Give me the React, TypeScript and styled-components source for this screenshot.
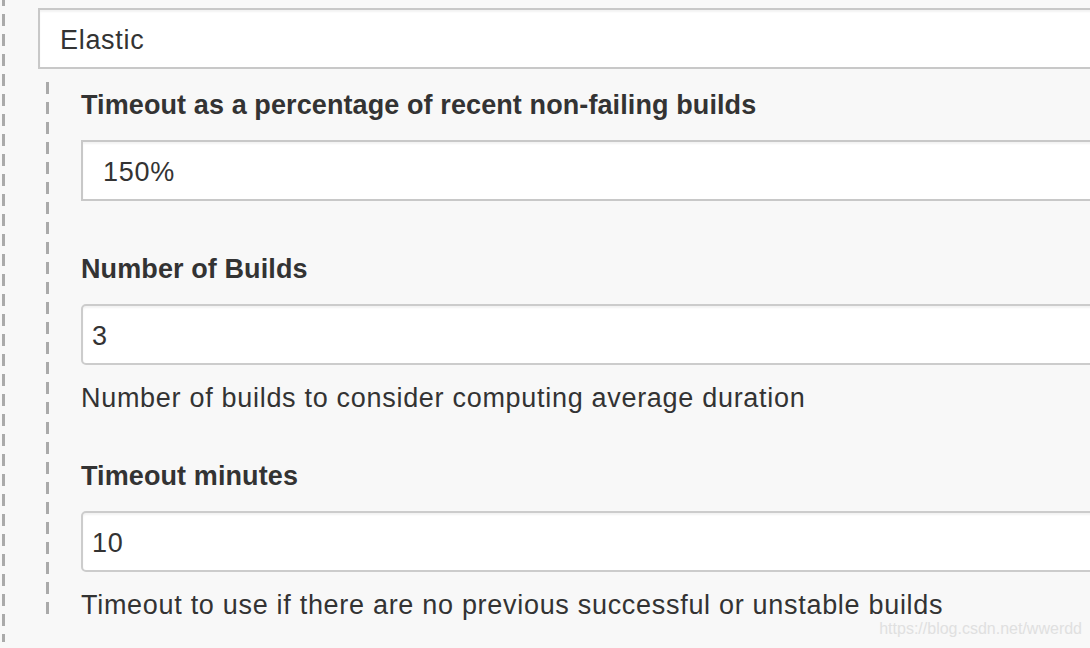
import React from "react";
import styled, { createGlobalStyle } from "styled-components";

const GlobalStyle = createGlobalStyle`
  html, body {
    margin: 0;
    padding: 0;
    background: #f8f8f8;
    overflow: hidden;
  }
  body {
    font-family: "Liberation Sans", Arial, Helvetica, sans-serif;
    color: #333;
  }
`;

const dashes = (color: string) =>
  `repeating-linear-gradient(to bottom, ${color} 0 12px, transparent 12px 20px)`;

const Page = styled.div`
  position: relative;
  width: 1120px;
  height: 648px;
  overflow: hidden;
`;

const OuterSection = styled.div`
  margin-left: 2px;
  padding: 8px 0 0 36px;
  min-height: 640px;
  background-image: ${dashes("#aaaaaa")};
  background-size: 3px 100%;
  background-repeat: no-repeat;
  background-position: 0 -6px;
`;

const SelectBox = styled.div<{ $pad?: number }>`
  box-sizing: border-box;
  height: 61px;
  display: flex;
  align-items: center;
  padding: 3px 0 0 ${(p) => p.$pad ?? 20}px;
  background: #fff;
  border: 2px solid #c8c8c8;
  box-shadow: inset 0 2px 2px rgba(0, 0, 0, 0.05);
  font-size: 27px;
  letter-spacing: 0.7px;
  color: #333;
`;

const InnerSection = styled.div`
  margin: 13px 0 0 8px;
  padding: 8px 0 0 35px;
  background-image: ${dashes("#aaaaaa")};
  background-size: 3px 100%;
  background-repeat: no-repeat;
`;

const Field = styled.div<{ $after: number }>`
  display: flex;
  flex-direction: column;
  margin-bottom: ${(p) => p.$after}px;
`;

const Label = styled.div`
  font-size: 27px;
  line-height: 30px;
  font-weight: 700;
  letter-spacing: 0.1px;
  color: #333;
`;

const Control = styled.div`
  margin-top: 20px;
`;

const TextInput = styled.input`
  box-sizing: border-box;
  display: block;
  width: 100%;
  height: 61px;
  margin: 0;
  padding: 3px 0 0 9px;
  background: #fff;
  border: 2px solid #cccccc;
  border-radius: 5px;
  box-shadow: inset 0 2px 2px rgba(0, 0, 0, 0.05);
  font-family: "Liberation Sans", Arial, Helvetica, sans-serif;
  font-size: 27px;
  letter-spacing: 0.7px;
  color: #333;
  outline: none;
`;

const Help = styled.div`
  margin-top: 18px;
  font-size: 27px;
  line-height: 30px;
  letter-spacing: 0.7px;
  color: #333;
`;

const Watermark = styled.div`
  position: absolute;
  right: 38px;
  bottom: 10px;
  font-family: "Liberation Sans", Arial, sans-serif;
  font-size: 16px;
  color: #e0e0e0;
`;

export default function App() {
  return (
    <>
      <GlobalStyle />
      <Page>
        <OuterSection>
          <SelectBox>Elastic</SelectBox>
          <InnerSection>
            <Field $after={53}>
              <Label>Timeout as a percentage of recent non-failing builds</Label>
              <Control>
                <SelectBox>150%</SelectBox>
              </Control>
            </Field>
            <Field $after={48}>
              <Label>Number of Builds</Label>
              <Control>
                <TextInput defaultValue="3" readOnly />
              </Control>
              <Help>Number of builds to consider computing average duration</Help>
            </Field>
            <Field $after={40}>
              <Label>Timeout minutes</Label>
              <Control>
                <TextInput defaultValue="10" readOnly />
              </Control>
              <Help>Timeout to use if there are no previous successful or unstable builds</Help>
            </Field>
          </InnerSection>
        </OuterSection>
        <Watermark>https://blog.csdn.net/wwerdd</Watermark>
      </Page>
    </>
  );
}
